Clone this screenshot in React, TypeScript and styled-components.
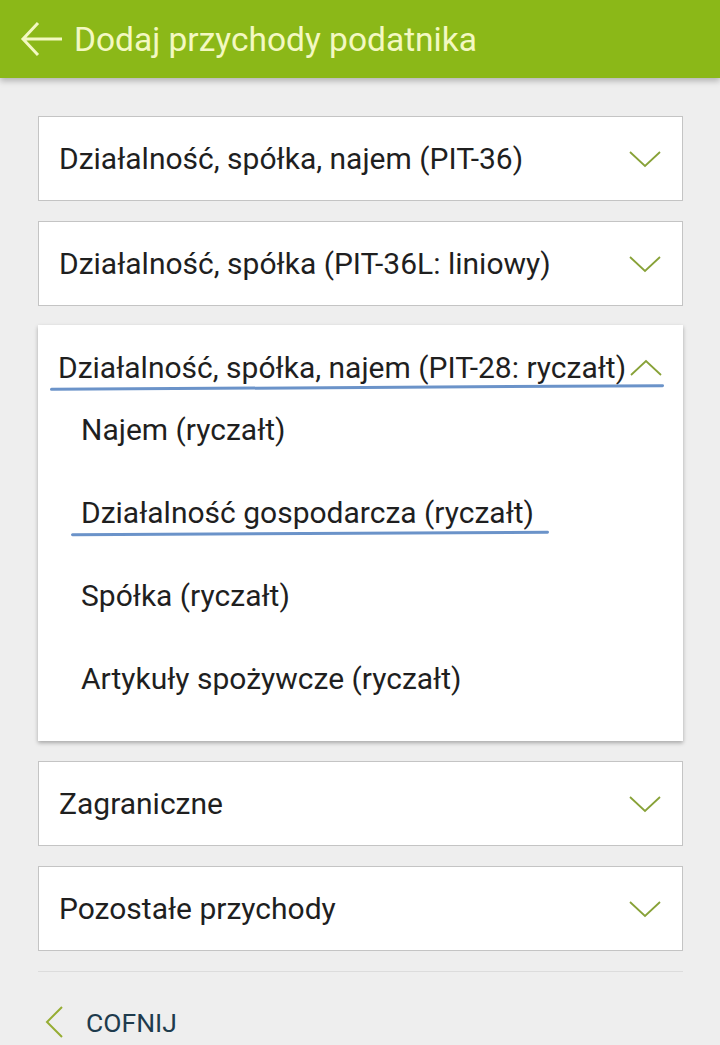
import styled, { createGlobalStyle } from "styled-components";

const GlobalStyle = createGlobalStyle`
   html, body {
      margin: 0;
      padding: 0;
      background: #eeeeee;
   }
   body {
      font-family: Roboto, "Liberation Sans", sans-serif;
      color: #1f1f1f;
   }
`;

const Page = styled.div`
   width: 720px;
   min-height: 1045px;
   background: #eeeeee;
`;

const Header = styled.header`
   height: 78px;
   background: #8bb818;
   display: flex;
   align-items: center;
   padding-left: 20px;
   gap: 10px;
   box-shadow: 0 3px 6px rgba(0, 0, 0, 0.25);
   position: relative;
`;

const HeaderTitle = styled.h1`
   margin: 0;
   font-size: 33.5px;
   font-weight: 400;
   color: #f3f8c2;
`;

const Content = styled.main`
   padding: 38px 37px 0 38px;
   display: flex;
   flex-direction: column;
   gap: 20px;
`;

const Card = styled.div`
   background: #ffffff;
   border: 1px solid #c4c4c4;
   height: 85px;
   box-sizing: border-box;
   display: flex;
   align-items: center;
   justify-content: space-between;
   padding: 0 20px 0 20px;
`;

const Label = styled.span`
   font-size: 30px;
   line-height: 36px;
   color: #1f1f1f;
   white-space: nowrap;
`;

const ExpandedCard = styled.div`
   background: #ffffff;
   box-shadow: 0 2px 4px rgba(0, 0, 0, 0.3);
   padding-bottom: 20px;
   margin-top: -1px;
`;

const ExpandedHeader = styled.div`
   position: relative;
   height: 64px;
   box-sizing: border-box;
   padding: 25px 20px 3px 20px;
   display: flex;
   justify-content: space-between;
   align-items: center;

   &::after {
      content: "";
      position: absolute;
      left: 12px;
      right: 19px;
      bottom: 0;
      height: 3px;
      border-radius: 2px;
      background: #6b93c9;
      transform: rotate(-0.35deg);
   }
`;

const Item = styled.div`
   height: 83px;
   padding-left: 43px;
   display: flex;
   align-items: flex-start;
   padding-top: 23px;
   box-sizing: border-box;
`;

const ItemLabel = styled.span<{ $marked?: boolean }>`
   position: relative;
   font-size: 30px;
   line-height: 36px;
   color: #1f1f1f;

   ${({ $marked }) =>
      $marked &&
      `
      &::after {
         content: "";
         position: absolute;
         left: -10px;
         right: -15px;
         bottom: -4px;
         height: 3px;
         border-radius: 2px;
         background: #6b93c9;
         transform: rotate(-0.3deg);
      }
   `}
`;

const Divider = styled.hr`
   margin: 0;
   border: none;
   border-top: 1px solid #dcdcdc;
`;

const BackLink = styled.div`
   display: flex;
   align-items: center;
   gap: 22px;
   padding-left: 6px;
   height: 60px;
`;

const BackText = styled.span`
   font-size: 26.5px;
   color: #1e3b4d;
`;

const Chevron = ({ up }: { up?: boolean }) => (
   <svg width="34" height="18" viewBox="0 0 34 18">
      <path
         d={up ? "M2 16 L17 2 L32 16" : "M2 2 L17 16 L32 2"}
         fill="none"
         stroke="#88a238"
         strokeWidth="1.8"
      />
   </svg>
);

const BackArrow = () => (
   <svg width="44" height="36" viewBox="0 0 44 36">
      <path
         d="M18 2 L3 18 L18 34 M3 18 L42 18"
         fill="none"
         stroke="#f3f8c2"
         strokeWidth="3"
      />
   </svg>
);

const SmallChevron = () => (
   <svg width="20" height="32" viewBox="0 0 20 32">
      <path d="M18 1 L3 16 L18 31" fill="none" stroke="#96ad33" strokeWidth="2" />
   </svg>
);

const collapsedTop = [
   "Działalność, spółka, najem (PIT-36)",
   "Działalność, spółka (PIT-36L: liniowy)",
];

const collapsedBottom = ["Zagraniczne", "Pozostałe przychody"];

const subItems = [
   { label: "Najem (ryczałt)" },
   { label: "Działalność gospodarcza (ryczałt)", marked: true },
   { label: "Spółka (ryczałt)" },
   { label: "Artykuły spożywcze (ryczałt)" },
];

export default function App() {
   return (
      <Page>
         <GlobalStyle />
         <Header>
            <BackArrow />
            <HeaderTitle>Dodaj przychody podatnika</HeaderTitle>
         </Header>
         <Content>
            {collapsedTop.map((t) => (
               <Card key={t}>
                  <Label>{t}</Label>
                  <Chevron />
               </Card>
            ))}
            <ExpandedCard>
               <ExpandedHeader>
                  <Label>Działalność, spółka, najem (PIT-28: ryczałt)</Label>
                  <Chevron up />
               </ExpandedHeader>
               {subItems.map((s) => (
                  <Item key={s.label}>
                     <ItemLabel $marked={s.marked}>{s.label}</ItemLabel>
                  </Item>
               ))}
            </ExpandedCard>
            {collapsedBottom.map((t) => (
               <Card key={t}>
                  <Label>{t}</Label>
                  <Chevron />
               </Card>
            ))}
            <Divider />
            <BackLink>
               <SmallChevron />
               <BackText>COFNIJ</BackText>
            </BackLink>
         </Content>
      </Page>
   );
}
